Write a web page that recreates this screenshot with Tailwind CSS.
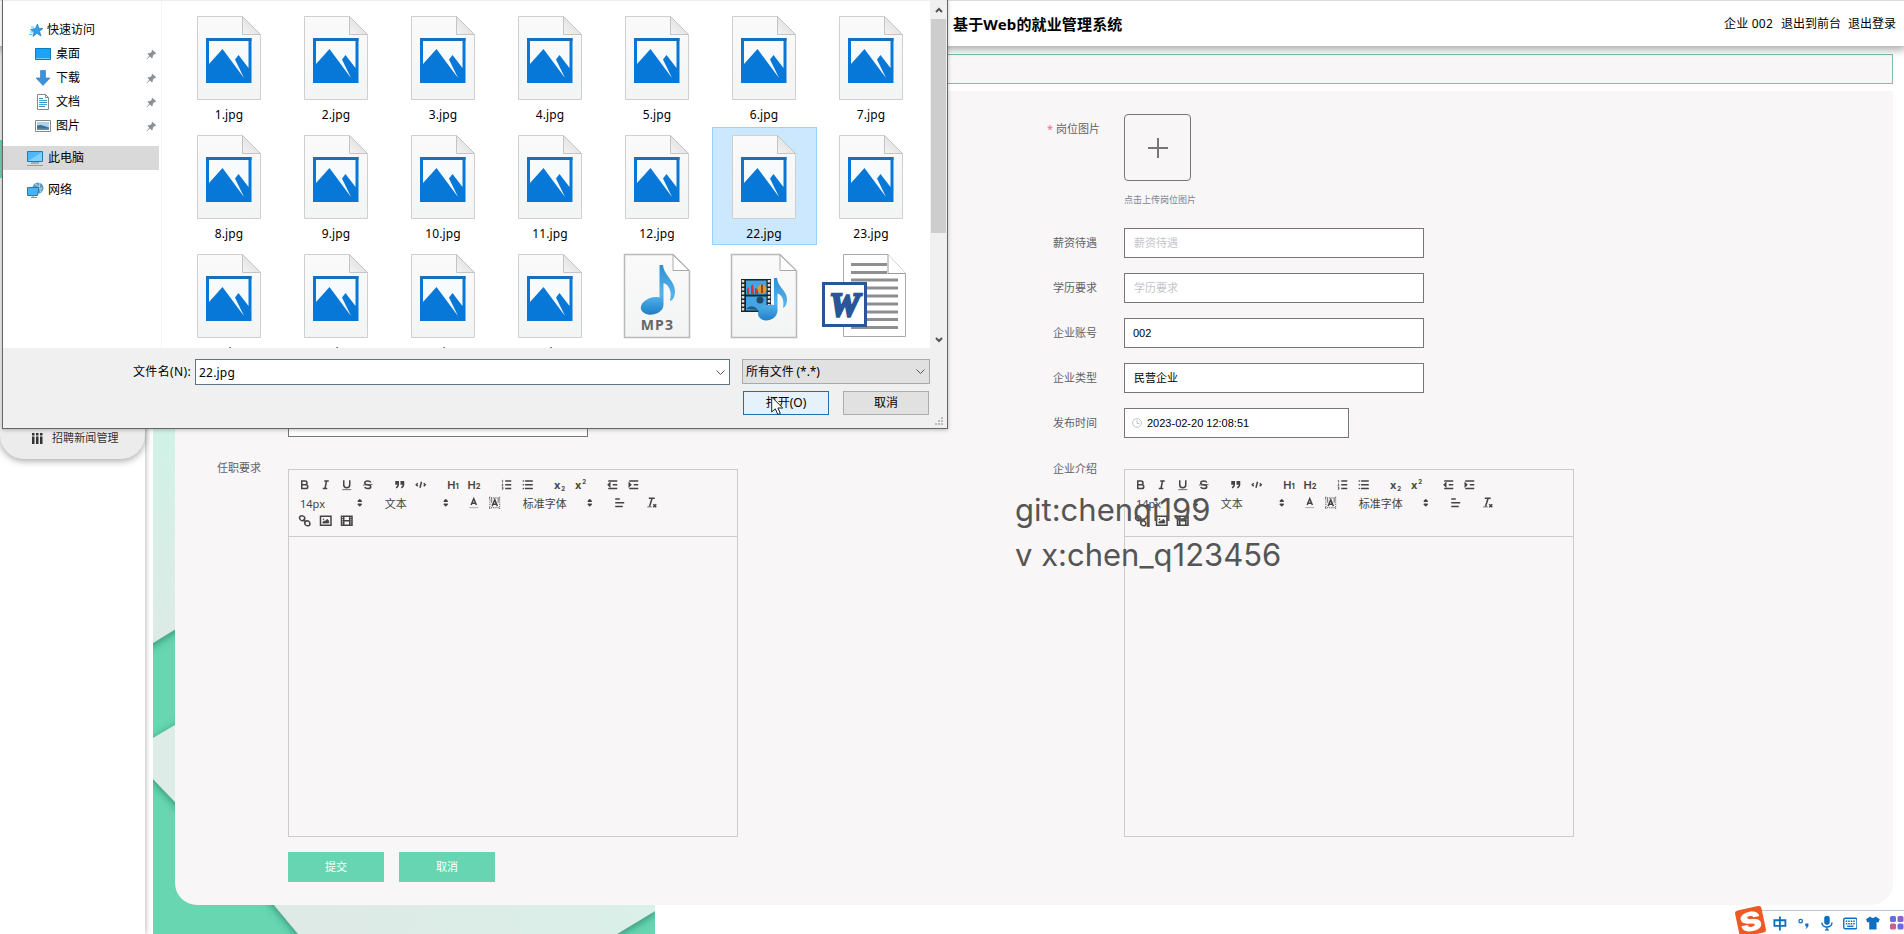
<!DOCTYPE html>
<html lang="zh-CN">
<head>
<meta charset="utf-8">
<title>基于Web的就业管理系统</title>
<script src="https://cdn.jsdelivr.net/npm/@tailwindcss/browser@4"></script>
</head>
<body class="relative h-[934px] w-[1904px] overflow-hidden bg-white font-['Noto_Sans','Noto_Sans_CJK_SC',sans-serif] text-[12px] text-black">

<!-- shared symbols -->
<svg class="absolute size-0">
  <linearGradient id="paper" x1="0" y1="0" x2="0" y2="1"><stop offset="0" stop-color="#fafafa"/><stop offset="1" stop-color="#f3f4f4"/></linearGradient>
  <linearGradient id="fold" x1="0" y1="1" x2="1" y2="0"><stop offset="0" stop-color="#f4f4f4"/><stop offset="1" stop-color="#d6d6d6"/></linearGradient>
  <linearGradient id="note" x1="0" y1="0" x2="0" y2="1"><stop offset="0" stop-color="#2f8fd0"/><stop offset=".6" stop-color="#55b4ec"/><stop offset="1" stop-color="#1f7fc8"/></linearGradient>
  <symbol id="picfile" viewBox="0 0 64 85">
    <path d="M.5.5H45.5L63.500 19V83.500H.5Z" fill="url(#paper)" stroke="#cfcfcf"/>
    <path d="M45.500.5V18.500H63.500Z" fill="url(#fold)" stroke="#c4c4c4"/>
    <path d="M9 22H54.500V67H9Z" fill="#0878d8"/>
    <path d="M9 22H54.500V25H9Z" fill="#1870bd"/>
    <path d="M12 25H51.500V52L41.500 39L38 43.500L47 62L25.500 33L12 48Z" fill="#f8fbfe"/>
  </symbol>
  <symbol id="mediafile" viewBox="0 0 68 87">
    <path d="M1.500 1.500H50L66.500 18V84.500H1.500Z" fill="url(#paper)" stroke="#b9b9b9" stroke-width="1.500"/>
    <path d="M50 2V17.500H66Z" fill="#fff" stroke="#aaa"/>
  </symbol>
  <symbol id="pin" viewBox="0 0 12 12">
    <path d="M7 .8L11.200 5L10 5.800L9.200 5.500L7.500 7.300L7.300 9.600L6.300 10.200L4.300 8.100L1 11.200L.6 11L3.600 7.300L1.700 5.500L2.300 4.600L4.700 4.400L6.400 2.700L6.200 1.700Z" fill="#8b9196"/>
  </symbol>
  <symbol id="arrows" viewBox="0 0 18 18"><path d="M7 11L9 13L11 11ZM7 7L9 5L11 7Z" fill="#444" stroke="#444" stroke-width="2" stroke-linejoin="round"/></symbol>
</svg>

<!-- page header -->
<header class="relative z-10 flex h-[46px] items-center justify-between border-t border-[#dcdcdc] bg-white pl-[953px] pr-[8px] shadow-[0_2px_8px_2px_rgba(0,0,0,0.32)]">
  <h1 class="text-[15px] font-bold leading-5 tracking-[0.150px]">基于Web的就业管理系统</h1>
  <nav class="flex gap-[7px] text-[12px] leading-4"><span class="pr-[1px] tracking-[0.200px]">企业 002</span><span>退出到前台</span><span>退出登录</span></nav>
</header>

<div class="flex h-[888px]">
  <!-- sidebar -->
  <aside class="h-full w-[145px] shrink-0 bg-white shadow-[0_0_6px_rgba(0,0,0,0.35)]">
    <div class="flex h-[413px] w-[145px] flex-col justify-end rounded-b-[24px] bg-[#ececec] shadow-[0_2px_7px_rgba(0,0,0,0.35)]">
      <div class="h-[38px] w-full bg-[#67d5b1]"></div>
      <div class="h-[244px]"></div>
      <div class="flex h-[37px] items-center gap-[9px] pb-[5px] pl-[32px] text-[11px] text-[#333]">
        <svg class="size-[11px]" viewBox="0 0 11 11" fill="#333"><path d="M0 0H2.500V2.500H0ZM0 3.500H2.500V11H0ZM4 0H6.500V2.500H4ZM4 3.500H6.500V11H4ZM8 0H10.500V2.500H8ZM8 3.500H10.500V11H8Z"/></svg>
        <span class="tracking-[0.100px]">招聘新闻管理</span>
      </div>
    </div>
  </aside>

  <main class="relative flex-1 pl-[8px]">
    <!-- decorative backdrop -->
    <svg class="absolute left-[8px] top-0 h-[888px] w-[502px]" viewBox="0 0 502 888">
      <defs>
        <linearGradient id="mint" x1="0" y1="0" x2="0" y2="1"><stop offset="0" stop-color="#cdf5e7"/><stop offset="1" stop-color="#deeae6"/></linearGradient>
        <linearGradient id="mint2" x1="0" y1="0" x2="1" y2="0"><stop offset="0" stop-color="#dfe9e6"/><stop offset="1" stop-color="#daf0e8"/></linearGradient>
        <filter id="sh" x="-20%" y="-20%" width="140%" height="140%"><feDropShadow dx="0" dy="2" stdDeviation="4" flood-color="#145c46" flood-opacity=".6"/></filter>
      </defs>
      <rect width="502" height="888" fill="#67d6b1"/>
      <g filter="url(#sh)">
        <path d="M-30 300H60V560L0 597L-30 615Z" fill="url(#mint)"/>
        <path d="M-20 704L22 679L60 655V803L22 756L0 733L-20 709Z" fill="#ddece7"/>
        <path d="M97 830L121 859L160 906H440L464 888L502 865V830Z" fill="url(#mint2)"/>
      </g>
    </svg>

    <div class="relative w-[1740px] pt-[8px]">
      <div class="h-[30px] border border-[#7fc0aa] bg-[#f8f6f7]"></div>
      <div class="h-[7px] bg-white"></div>

      <!-- form panel -->
      <section class="ml-[22px] flex h-[814px] rounded-b-[22px] bg-[#f8f6f7] text-[11px] leading-[30px] text-[#606266]">
        <div class="w-[836px] pl-[29px]">
          <div class="h-[316px]"></div>
          <div class="flex h-[45px]"><div class="w-[60px] text-right"></div><div class="ml-[24px] h-[30px] w-[300px] border border-[#777] bg-white"></div></div>
          <div class="flex pt-[1px]">
            <div class="w-[57px] text-right">任职要求</div>
            <div class="editor ml-[27px] mt-[16px] h-[368px] w-[450px] border border-[#ccc]"></div>
          </div>
          <div class="mt-[15px] flex gap-[15px] pl-[84px] text-white">
            <button class="h-[30px] w-[96px] bg-[#67d5b1]">提交</button>
            <button class="h-[30px] w-[96px] bg-[#67d5b1]">取消</button>
          </div>
        </div>
        <div class="flex-1 pl-[29px] pt-[23px]">
          <div class="flex h-[114px]">
            <div class="w-[60px] whitespace-nowrap text-right"><span class="pr-[3px] text-[#f56c8c]">*</span>岗位图片</div>
            <div class="ml-[24px]">
              <div class="flex size-[67px] items-center justify-center rounded-[4px] border border-[#777]"><svg class="size-[20px]" viewBox="0 0 20 20"><path d="M0 10H20M10 0V20" stroke="#777" stroke-width="2"/></svg></div>
              <div class="pt-[4px] text-[9px] text-[#7a8496]">点击上传岗位图片</div>
            </div>
          </div>
          <div class="flex h-[45px]"><div class="w-[57px] text-right">薪资待遇</div><div class="ml-[27px] h-[30px] w-[300px] border border-[#777] bg-white pl-[9px] leading-[28px] text-[#c3c5ca]">薪资待遇</div></div>
          <div class="flex h-[45px]"><div class="w-[57px] text-right">学历要求</div><div class="ml-[27px] h-[30px] w-[300px] border border-[#777] bg-white pl-[9px] leading-[28px] text-[#c3c5ca]">学历要求</div></div>
          <div class="flex h-[45px]"><div class="w-[57px] text-right">企业账号</div><div class="ml-[27px] h-[30px] w-[300px] border border-[#777] bg-white pl-[8px] font-['Liberation_Sans',sans-serif] leading-[28px] text-black">002</div></div>
          <div class="flex h-[45px]"><div class="w-[57px] text-right">企业类型</div><div class="ml-[27px] h-[30px] w-[300px] border border-[#777] bg-white pl-[9px] leading-[28px] text-black">民营企业</div></div>
          <div class="flex h-[45px]"><div class="w-[57px] text-right">发布时间</div>
            <div class="ml-[27px] flex h-[30px] w-[225px] items-center border border-[#777] bg-white pl-[7px] font-['Liberation_Sans',sans-serif] text-[11px] text-black">
              <svg class="mr-[5px] size-[10px]" viewBox="0 0 10 10" fill="none" stroke="#c0c4cc"><circle cx="5" cy="5" r="4.400"/><path d="M5 2V5.500H7.500"/></svg>2023-02-20 12:08:51</div>
          </div>
          <div class="flex pt-[1px]">
            <div class="w-[57px] text-right">企业介绍</div>
            <div class="editor ml-[27px] mt-[15px] h-[368px] w-[450px] border border-[#ccc]"></div>
          </div>
        </div>
      </section>
    </div>
  </main>
</div>

<!-- rich text toolbar -->
<template id="toolbar">
  <div class="h-[67px] border-b border-[#ccc] pl-[5px] pt-[6px] leading-none text-[#444] [&_svg]:size-[13.500px] [&_svg]:fill-none [&_svg]:stroke-[#444] [&_svg]:stroke-2 [&_i]:flex [&_i]:h-[18px] [&_i]:w-[21px] [&_i]:items-center [&_i]:justify-center [&_i]:not-italic">
    <div class="flex h-[18px] gap-[11.250px]">
      <div class="flex">
        <i><svg viewBox="0 0 18 18"><path d="M5 4H9.500A2.500 2.500 0 0 1 9.500 9H5ZM5 9H10.500A2.500 2.500 0 0 1 10.500 14H5Z"/></svg></i>
        <i><svg viewBox="0 0 18 18"><path d="M7 4H13M5 14H11M8 14L10 4"/></svg></i>
        <i><svg viewBox="0 0 18 18"><path d="M5 3V9A4 4 0 0 0 13 9V3"/><path d="M3 15.500H15" stroke-width="1"/></svg></i>
        <i><svg viewBox="0 0 18 18"><path d="M13 6C12.500 4.700 11 4 9 4C6.700 4 5 5 5 6.500C5 8 6.500 8.700 9 9C11.500 9.300 13 10 13 11.500C13 13 11.300 14 9 14C7 14 5.500 13.300 5 12"/><path d="M2.500 9.500L15.500 8.500" stroke-width="1"/></svg></i>
      </div>
      <div class="flex">
        <i><svg viewBox="0 0 18 18"><path d="M4 5H7V8H4ZM11 5H14V8H11Z" fill="#444"/><path d="M7 8C7 12 4 13 4 13M14 8C14 12 11 13 11 13"/></svg></i>
        <i><svg viewBox="0 0 18 18"><path d="M5 7L3 9L5 11M13 7L15 9L13 11M10 5L8 13"/></svg></i>
      </div>
      <div class="flex font-['Inter',sans-serif] font-semibold">
        <i class="text-[11px]">H<small class="pt-[3px] text-[7.500px] font-bold">1</small></i>
        <i class="text-[11px]">H<small class="pt-[3px] text-[7.500px] font-bold">2</small></i>
      </div>
      <div class="flex">
        <i><svg viewBox="0 0 18 18"><path d="M7 4H15M7 9H15M7 14H15"/><path d="M2.500 3.500L3.500 3V6M2.500 8H4L2.500 10.500H4.500M2.500 12.500H4V15H2.500M3 13.700H4" stroke-width="1"/></svg></i>
        <i><svg viewBox="0 0 18 18"><path d="M6 4H15M6 9H15M6 14H15M3 4H3.010M3 9H3.010M3 14H3.010" stroke-linecap="round"/></svg></i>
      </div>
      <div class="flex font-['Inter',sans-serif] font-bold">
        <i class="text-[11px]">x<small class="pl-[1px] pt-[7px] text-[6px]">2</small></i>
        <i class="text-[11px]">x<small class="pb-[6px] pl-[1px] text-[6px]">2</small></i>
      </div>
      <div class="flex">
        <i><svg viewBox="0 0 18 18"><path d="M3 14H15M3 4H15M9 9H15"/><path d="M5 7V11L3 9Z" fill="#444"/></svg></i>
        <i><svg viewBox="0 0 18 18"><path d="M3 14H15M3 4H15M9 9H15"/><path d="M3 7V11L5 9Z" fill="#444"/></svg></i>
      </div>
    </div>
    <div class="flex h-[18px] gap-[11.250px]">
      <div class="flex w-[73.500px] items-center justify-between pl-[6px]"><span>14px</span><svg class="mr-[1px]"><use href="#arrows"/></svg></div>
      <div class="flex w-[73.500px] items-center justify-between pl-[6px]"><span>文本</span><svg><use href="#arrows"/></svg></div>
      <div class="flex">
        <i><svg viewBox="0 0 18 18"><path d="M3 15.500H15" stroke-width="1" stroke="#999"/><path d="M5.500 12L9 3.500L12.500 12M6.500 9.500H11.500"/></svg></i>
        <i><svg viewBox="0 0 18 18"><path d="M1.500 2.500H16.500M1.500 15.500H16.500M2.500 1V17M15.500 1V17" stroke-width="1.500" stroke-dasharray="1 1.500"/><path d="M5.500 6H4M14 6H12.500" stroke-width="6" stroke-dasharray="1 1"/><path d="M5.500 13.500L9 5L12.500 13.500M6.500 11H11.500"/></svg></i>
      </div>
      <div class="flex w-[81px] items-center justify-between pl-[6px]"><span>标准字体</span><svg class="mr-[1px]"><use href="#arrows"/></svg></div>
      <i><svg viewBox="0 0 18 18"><path d="M3 9H15M3 14H13M3 4H9"/></svg></i>
      <i><svg viewBox="0 0 18 18"><path d="M5 3H13M6 14L9.500 3M11 11L15 15M15 11L11 15"/><path d="M3 14.500H9" stroke-width="1"/></svg></i>
    </div>
    <div class="flex h-[18px]">
      <i><svg viewBox="0 0 18 18"><path d="M7 7L11 11M8.900 4.600C9.300 6.500 8.800 8.200 7.400 8.700C6 9.300 4.200 8.900 3 7.500C1.800 6 2 4 3.100 2.900C4.500 1.800 8 2.300 8.900 4.600ZM9.100 13.400C8.700 11.500 9.200 9.800 10.600 9.300C12 8.700 13.800 9.100 15 10.500C16.200 12 16 14 14.900 15.100C13.500 16.200 10 15.700 9.100 13.400Z"/></svg></i>
      <i><svg viewBox="0 0 18 18"><path d="M2 3H16V15H2Z"/><path d="M5 12V11L7 9L8 10L11 7L13 9V12Z" fill="#444" stroke-width="1"/><circle cx="6" cy="7" r="1" stroke="none" fill="#444"/></svg></i>
      <i><svg viewBox="0 0 18 18"><path d="M2 3H16V15H2ZM5 3V15M13 3V15M5 9H13"/><path d="M2 6H5M2 9H5M2 12H5M13 6H16M13 9H16M13 12H16" stroke-width="1"/></svg></i>
    </div>
  </div>
</template>

<!-- contact watermark -->
<div class="absolute left-[1015px] top-[487px] z-20 whitespace-pre font-['Inter',sans-serif] text-[31px] font-normal leading-[45px] text-[#555]"><div>git:chenqi199</div><div>v x:chen_q123456</div></div>

<!-- file picker window -->
<div class="absolute left-[2px] top-0 z-30 flex h-[429px] w-[946px] flex-col border border-t-0 border-[#666] bg-[#f0f0f0] shadow-[0_1px_4px_rgba(0,0,0,0.25)]">
  <div class="flex h-[348px] border-t border-[#eee] bg-white">
    <div class="h-full w-[159px] border-r border-[#f5f5f5] pt-[17px] leading-6">
      <div class="flex h-[24px] items-center gap-[3px] pl-[26px]">
        <svg class="size-[15px]" viewBox="0 0 15 15"><path d="M8.500 1L9.700 5.200L14 5.500L10.500 8.200L12 13L8 10.300L4 13.500L5 9L1.500 6.500L6.300 5.500Z" fill="#2f9fe6" stroke="#1d7fc4" stroke-width=".7"/><path d="M1 9H4M0 11.500H3.500M2 4H5" stroke="#5bb5ee"/></svg><span>快速访问</span></div>
      <div class="flex h-[24px] items-center gap-[5px] pl-[32px]">
        <svg class="size-[16px]" viewBox="0 0 16 16"><path d="M.5 2.500H15.500V13.500H.5Z" fill="#1ba4f5" stroke="#1477b8"/><path d="M1 12.500H15" stroke="#75cdf8"/></svg><span>桌面</span><svg class="ml-auto mr-[4px] size-[11px]"><use href="#pin"/></svg></div>
      <div class="flex h-[24px] items-center gap-[5px] pl-[32px]">
        <svg class="size-[16px]" viewBox="0 0 16 16"><path d="M5.500.5H10.500V8H15L8 15.500L1 8H5.500Z" fill="#3c93dc" stroke="#2a78bd" stroke-width=".6"/></svg><span>下载</span><svg class="ml-auto mr-[4px] size-[11px]"><use href="#pin"/></svg></div>
      <div class="flex h-[24px] items-center gap-[5px] pl-[32px]">
        <svg class="size-[16px]" viewBox="0 0 16 16"><path d="M2.500.5H10.500L13.500 3.500V15.500H2.500Z" fill="#fff" stroke="#888"/><path d="M10.500.5V3.500H13.500" fill="none" stroke="#888"/><path d="M4 4.500H8M4 8.500H12M4 12.500H10" stroke="#4d8fb8"/><path d="M4 6.500H12M4 10.500H12" stroke="#36aee0"/></svg><span>文档</span><svg class="ml-auto mr-[4px] size-[11px]"><use href="#pin"/></svg></div>
      <div class="flex h-[24px] items-center gap-[5px] pl-[32px]">
        <svg class="size-[16px]" viewBox="0 0 16 16"><path d="M.5 2.500H15.500V13.500H.5Z" fill="#fff" stroke="#888"/><path d="M2 4H14V12H2Z" fill="#a9d3ee"/><path d="M2 7.500L6 7L14 9.500V12H2Z" fill="#3f6f8e"/><path d="M2 10.500H14V12H2Z" fill="#6b8fa8"/></svg><span>图片</span><svg class="ml-auto mr-[4px] size-[11px]"><use href="#pin"/></svg></div>
      <div class="mt-[8px] flex h-[24px] w-[156px] items-center gap-[5px] bg-[#d9d9d9] pl-[24px]">
        <svg class="size-[16px]" viewBox="0 0 16 16"><path d="M.5 1.500H15.500V11.500H.5Z" fill="#4db8f5" stroke="#2b78a8"/><path d="M1 11L15 2V11Z" fill="#7fd0fa"/><path d="M4 13H12" stroke="#3f8fbf"/><path d="M0 15.500H16" stroke="#8aa0ad"/></svg><span>此电脑</span></div>
      <div class="mt-[8px] flex h-[24px] items-center gap-[4px] pl-[24px]">
        <svg class="size-[17px]" viewBox="0 0 17 17"><circle cx="11" cy="6" r="5.500" fill="#5f9cc0"/><path d="M8 2C11 3 11 6 15 7M13 1C11 5 13 8 14 10" stroke="#c7e2f0" fill="none"/><path d="M.5 5.500H12L10.500 13.500H.5Z" fill="#45b4f0" stroke="#2b78a8"/><path d="M4 15.500H10M6 13.500V15" stroke="#5b98ba"/></svg><span>网络</span></div>
    </div>
    <!-- file tiles -->
    <div class="h-full w-[768px] overflow-hidden pl-[15px] pt-[7px]">
      <div id="tiles" class="grid grid-cols-[repeat(7,105px)] gap-x-[2px] gap-y-[1px]"></div>
    </div>
    <div class="flex h-full w-[17px] flex-col items-center bg-[#f0f0f0]">
      <div class="flex h-[18px] items-center"><svg class="size-[8px]" viewBox="0 0 8 8"><path d="M1 6L4 3L7 6" fill="none" stroke="#555" stroke-width="2"/></svg></div>
      <div class="h-[214px] w-[15px] bg-[#cdcdcd]"></div>
      <div class="mt-auto flex h-[17px] items-center"><svg class="size-[8px]" viewBox="0 0 8 8"><path d="M1 2L4 5L7 2" fill="none" stroke="#555" stroke-width="2"/></svg></div>
    </div>
  </div>
  <div class="flex pt-[11px]">
    <div class="w-[188px] pt-px text-right leading-[24px] tracking-[0.350px]">文件名(N):</div>
    <div class="ml-[4px] flex h-[26px] w-[535px] items-center justify-between border border-[#5f7488] bg-white pl-[3px] pr-[4px] pt-[1px]"><span class="tracking-[0.200px]">22.jpg</span><svg class="size-[9px]" viewBox="0 0 9 9"><path d="M.5 2.500L4.500 6.500L8.500 2.500" fill="none" stroke="#555"/></svg></div>
    <div class="ml-[12px] flex h-[25px] w-[188px] items-center justify-between border border-[#aaa] bg-[#e1e1e1] pl-[3px] pr-[4px]"><span class="tracking-[-0.100px]">所有文件 (*.*)</span><svg class="size-[9px]" viewBox="0 0 9 9"><path d="M.5 2.500L4.500 6.500L8.500 2.500" fill="none" stroke="#555"/></svg></div>
  </div>
  <div class="flex gap-[14px] pl-[740px] pt-[6px]">
    <button class="h-[24px] w-[86px] border border-[#1f6fb5] bg-[#e5f1fb]">打开(O)</button>
    <button class="h-[24px] w-[86px] border border-[#adadad] bg-[#e1e1e1]">取消</button>
  </div>
  <svg class="absolute bottom-[2px] right-[3px] size-[9px]" viewBox="0 0 9 9" fill="#bbb"><path d="M6 0H8V2H6ZM3 3H5V5H3ZM6 3H8V5H6ZM0 6H2V8H0ZM3 6H5V8H3ZM6 6H8V8H6Z"/></svg>
  <svg class="absolute left-[768px] top-[396px] h-[20px] w-[13px]" viewBox="0 0 13 20"><path d="M.7 1V16L4.300 12.800L6.800 18.500L9.300 17.400L6.900 12H11.800Z" fill="#fff" stroke="#222" stroke-width="1"/></svg>
</div>

<template id="mp3">
  <div class="relative -ml-[2px] -mt-px h-[87px] w-[68px]">
    <svg class="size-full" viewBox="0 0 68 87"><use href="#mediafile"/><path d="M36.500 12H40C41 23 53 28 52 40C51.500 44 50 47 47 48C49 40 47 32 40.500 30V52C40 59 32 62.500 25 61.500C18 60 15 54 21 48.500C25 45 31 43 36.500 44.500Z" fill="url(#note)"/></svg>
    <span class="absolute inset-x-0 top-[64px] pl-[1px] text-center font-['Open_Sans',sans-serif] text-[14px] font-bold leading-4 tracking-[1.200px] text-[#666]">MP3</span>
  </div>
</template>
<template id="video">
  <svg class="-ml-[2px] -mt-px h-[87px] w-[68px]" viewBox="0 0 68 87"><use href="#mediafile"/>
    <path d="M11 26H41V59H11Z" fill="#222"/><path d="M13 27V59M39 27V59" stroke="#ddd" stroke-width="2.500" stroke-dasharray="2.500 1.500"/>
    <path d="M16 27.500H36.500V41.500H16ZM16 43.500H36.500V57.500H16Z" fill="#43a5e3"/>
    <path d="M17 41V36L19 34V41ZM21 41V33L23 31L24 41ZM25 41V35L28 36V41Z" fill="#d3323a"/><circle cx="32" cy="36" r="4.500" fill="#e09a2c"/><path d="M32 31.500V40" stroke="#7a2b1c" stroke-width="1.500"/>
    <circle cx="30" cy="47" r="3.500" fill="#234b6b"/><path d="M16 56Q22 50 28 57Z" fill="#1b5b8d"/>
    <path d="M44 25H47C48 35 58 38 57 48C56.500 51.500 55.500 53.500 53 55C54.500 47 52 42 47.500 40.500V58C47 64 41 68 35 67.500C28 66 26 60 30 55.500C33.500 52 39 51 44 52Z" fill="url(#note)"/></svg>
</template>
<template id="word">
  <div class="relative h-[85px] w-[64px]">
    <svg class="absolute left-[4px] top-0 h-[85px] w-[64px]" viewBox="0 0 64 85"><path d="M.5.500H45L62.500 19.500V82.500H.5Z" fill="#fff" stroke="#aaa"/><path d="M8 10.500H44M8 18.500H44M8 26H55M8 34H55M8 42H55M8 50H55M8 58H55M8 65.500H55M8 73.500H55" stroke="#8f8f8f" stroke-width="3"/><path d="M45 .5V19.500H62.500" fill="#fff" stroke="#999"/></svg>
    <div class="absolute -left-[17px] top-[28px] flex size-[45px] items-center justify-center border-[3px] border-[#2a5699] bg-white font-['Liberation_Serif',serif] text-[34px] font-bold italic leading-none text-[#2a5699] [-webkit-text-stroke:2.500px_#2a5699]">W</div>
  </div>
</template>

<!-- input method bar -->
<div class="absolute right-0 top-[905px] z-20 flex h-[29px] w-[168px] items-start">
  <div class="relative ml-[10px] mt-[5px] h-[24px] w-[158px] border-t border-[#b9c4dc] bg-white">
    <div class="ml-[27px] flex h-[24px] items-center gap-[9px] text-[#0b6fc4]">
      <svg class="size-[15px]" viewBox="0 0 15 15" fill="none" stroke="#0b6fc4" stroke-width="2"><path d="M1.500 4H13.500V10H1.500ZM7.500 0V15"/></svg>
      <svg class="ml-[1px] h-[15px] w-[14px]" viewBox="0 0 14 15"><circle cx="4" cy="5" r="1.900" fill="none" stroke="#0b6fc4" stroke-width="1.400"/><path d="M9 7.500H12.500V9.500C12.500 11.500 11 13 9 13.500C10 12.500 10.500 11.500 10.300 10.500H9Z" fill="#0b6fc4"/></svg>
      <svg class="ml-[2px] h-[17px] w-[13px]" viewBox="0 0 13 17"><rect x="3.500" y="0" width="6" height="10" rx="3" fill="#0b6fc4"/><path d="M1 7.500C1 14 12 14 12 7.500M6.500 12.500V15.500" fill="none" stroke="#0b6fc4" stroke-width="1.500"/><path d="M4.500 15.500H8.500" stroke="#0b6fc4" stroke-width="1.500"/></svg>
      <svg class="ml-[1px] h-[13px] w-[16px]" viewBox="0 0 16 13"><rect x=".8" y=".8" width="14.400" height="11.400" rx="1.500" fill="none" stroke="#0b6fc4" stroke-width="1.500"/><path d="M3 4H13M3 6.700H13" stroke="#0b6fc4" stroke-width="1.600" stroke-dasharray="1.700 1"/><path d="M4.500 9.500H11.500" stroke="#0b6fc4" stroke-width="1.500"/></svg>
      <svg class="h-[14px] w-[15px]" viewBox="0 0 15 14"><path d="M4.500 0C5.500 2 9.500 2 10.500 0L15 3L13.500 6.500L11.500 6V14H3.500V6L1.500 6.500L0 3Z" fill="#0b6fc4"/></svg>
      <svg class="ml-[1px] h-[14px] w-[14px] shrink-0" viewBox="0 0 14 14"><rect width="6" height="6" rx="1.500" fill="#6a6be0"/><rect x="7.500" width="6" height="6" rx="1.500" fill="#8a62d8"/><rect y="7.500" width="6" height="6" rx="1.500" fill="#cc5f86"/><rect x="7.500" y="7.500" width="6" height="6" rx="1.500" fill="#6a6be0"/></svg>
    </div>
  </div>
  <div class="absolute left-[1px] top-[3px] flex size-[27px] -rotate-12 items-center justify-center rounded-[3px] bg-[#ee5a24] font-['Inter',sans-serif] text-[26px] font-black leading-none text-white"><span class="scale-x-125">S</span></div>
</div>

<script>
  const toolbar = document.getElementById('toolbar');
  document.querySelectorAll('.editor').forEach(e => e.append(toolbar.content.cloneNode(true)));

  const files = ['1.jpg','2.jpg','3.jpg','4.jpg','5.jpg','6.jpg','7.jpg','8.jpg','9.jpg','10.jpg','11.jpg','12.jpg','22.jpg','23.jpg','24.jpg','25.jpg','26.jpg','27.jpg','mp3','video','word'];
  const grid = document.getElementById('tiles');
  files.forEach(name => {
    const tile = document.createElement('div');
    tile.className = name === '22.jpg'
      ? 'flex h-[118px] flex-col items-center bg-[#cce8ff] pt-[8px] pr-[1px] outline outline-1 -outline-offset-1 outline-[#99d1ff]'
      : 'flex h-[118px] flex-col items-center pt-[8px] pr-[1px]';
    const special = document.getElementById(name);
    const box = document.createElement('div');
    box.className = 'h-[85px] w-[64px]';
    if (special) box.append(special.content.cloneNode(true));
    else box.innerHTML = '<svg class="h-[85px] w-[64px]"><use href="#picfile"/></svg>';
    tile.append(box);
    if (!special) {
      const label = document.createElement('div');
      label.className = 'pt-[6px] leading-4 tracking-[0.100px]';
      label.textContent = name;
      tile.append(label);
    }
    grid.append(tile);
  });
</script>
</body>
</html>
